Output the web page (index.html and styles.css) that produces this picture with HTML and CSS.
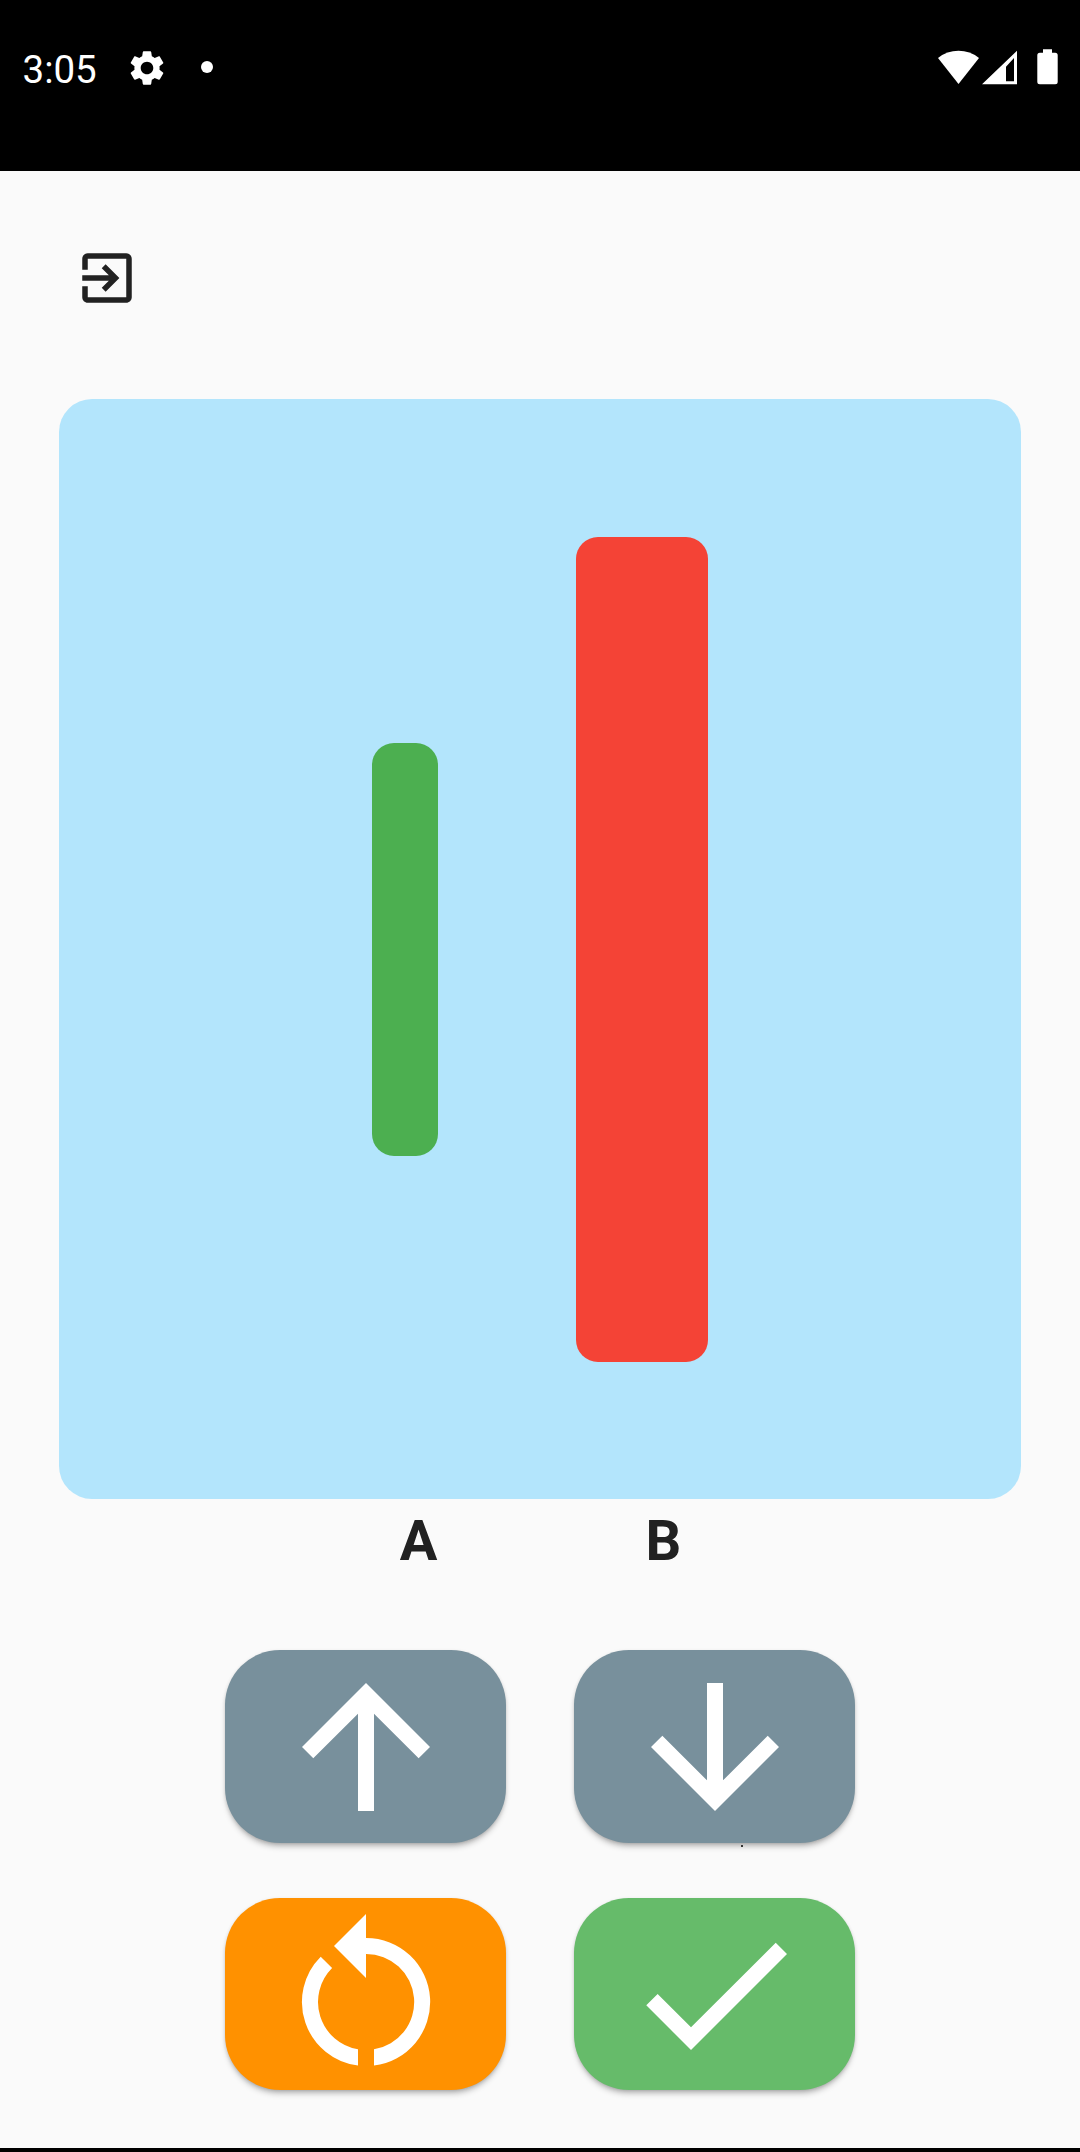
FILE: index.html
```html
<!DOCTYPE html>
<html lang="en-US">
    <head>
        <title>Compare</title>
        <meta name="viewport" content="width=device-width, initial-scale=1.0">
        <link rel="stylesheet" href="styles.css">
    </head>
    <body>

        <header class="status-bar">
            <span class="clock">3:05</span>
            <svg class="gear" viewBox="0 0 24 24"><path d="M19.14 12.94c.04-.3.06-.61.06-.94 0-.32-.02-.64-.07-.94l2.03-1.58c.18-.14.23-.41.12-.61l-1.92-3.32c-.12-.22-.37-.29-.59-.22l-2.39.96c-.5-.38-1.03-.7-1.62-.94l-.36-2.54c-.04-.24-.24-.41-.48-.41h-3.84c-.24 0-.43.17-.47.41l-.36 2.54c-.59.24-1.13.57-1.62.94l-2.39-.96c-.22-.08-.47 0-.59.22L2.74 8.87c-.12.21-.08.47.12.61l2.03 1.58c-.05.3-.09.63-.09.94s.02.64.07.94l-2.03 1.58c-.18.14-.23.41-.12.61l1.92 3.32c.12.22.37.29.59.22l2.39-.96c.5.38 1.03.7 1.62.94l.36 2.54c.05.24.24.41.48.41h3.84c.24 0 .44-.17.47-.41l.36-2.54c.59-.24 1.13-.56 1.62-.94l2.39.96c.22.08.47 0 .59-.22l1.92-3.32c.12-.22.07-.47-.12-.61l-2.01-1.58zM12 15.6c-1.98 0-3.6-1.62-3.6-3.6s1.62-3.6 3.6-3.6 3.6 1.62 3.6 3.6-1.62 3.6-3.6 3.6z"/></svg>
            <span class="dot"></span>
            <div class="status-icons">
                <svg class="wifi" viewBox="0 0 41 42"><path d="M0 12A33 33 0 0 1 41 12L20.5 38z"/></svg>
                <svg class="signal" viewBox="0 0 35 42"><path fill-rule="evenodd" d="M0 38.3L35 4.7V38.3zM24 20.7V35.3H32V12z"/></svg>
                <svg class="battery" viewBox="0 0 21 42"><path d="M6 3.3H15V6.7H18.2A2.5 2.5 0 0 1 20.7 9.2V35.8A2.5 2.5 0 0 1 18.2 38.3H2.8A2.5 2.5 0 0 1 .3 35.8V9.2A2.5 2.5 0 0 1 2.8 6.7H6z"/></svg>
            </div>
        </header>

        <main class="content">
            <div class="toolbar">
                <svg class="exit" viewBox="0 0 24 24"><path d="M10.09 15.59L11.5 17l5-5-5-5-1.41 1.41L12.67 11H3v2h9.67l-2.58 2.59zM19 3H5c-1.11 0-2 .9-2 2v4h2V5h14v14H5v-4H3v4c0 1.1.89 2 2 2h14c1.1 0 2-.9 2-2V5c0-1.1-.9-2-2-2z"/></svg>
            </div>

            <div class="chart">
                <div class="bar bar-a"></div>
                <div class="bar bar-b"></div>
            </div>

            <div class="labels">
                <span>A</span>
                <span>B</span>
            </div>

            <div class="controls">
                <button class="btn btn-grey" type="button">
                    <svg viewBox="0 0 24 24"><path d="M4 12l1.41 1.41L11 7.83V20h2V7.83l5.58 5.59L20 12l-8-8-8 8z"/></svg>
                </button>
                <button class="btn btn-grey" type="button">
                    <svg viewBox="0 0 24 24"><path d="M20 12l-1.41-1.41L13 16.17V4h-2v12.17l-5.58-5.59L4 12l8 8 8-8z"/></svg>
                    <span class="speck"></span>
                </button>
                <button class="btn btn-orange" type="button">
                    <svg viewBox="0 0 24 24"><path d="M12 2L8 6l4 4V7A6 6 0 0 1 13 18.92V20.94A8 8 0 0 0 12 5zM11 20.94V18.92A6 6 0 0 1 7.76 8.76L6.34 7.34A8 8 0 0 0 11 20.94z"/></svg>
                </button>
                <button class="btn btn-green" type="button">
                    <svg viewBox="0 0 24 24"><path d="M9 16.17L4.83 12l-1.42 1.41L9 19 21 7l-1.41-1.41z"/></svg>
                </button>
            </div>
        </main>

        <div class="nav-edge"></div>

    </body>
</html>
```

FILE: styles.css
```css
* {
    box-sizing: border-box;
    margin: 0;
}

html {
    background: #FAFAFA;
    color: #212121;
    font-family: Roboto, "Liberation Sans", sans-serif;
}

body {
    display: flex;
    flex-direction: column;
    height: 2152px;
    overflow: hidden;
}

svg {
    display: block;
    fill: currentColor;
}

/* status bar */
.status-bar {
    display: flex;
    align-items: flex-start;
    flex: none;
    height: 171px;
    padding: 46px 22px 0 22.5px;
    background: #000;
    color: #FFF;
}

.clock {
    width: 103px;
    margin-top: 3px;
    font-size: 38.5px;
    line-height: 42px;
}

.gear {
    width: 42px;
    height: 42px;
    margin-top: 0.5px;
}

.dot {
    width: 12px;
    height: 12px;
    margin: 15px 0 0 33.5px;
    background: #FFF;
    border-radius: 50%;
}

.status-icons {
    display: flex;
    margin-left: auto;
}

.wifi, .signal, .battery {
    height: 42px;
}

.wifi {
    width: 41px;
    margin-right: 3px;
}

.signal {
    width: 35px;
    margin-right: 20px;
}

.battery {
    width: 21px;
}

/* main */
.content {
    flex: 1;
}

.toolbar {
    height: 228px;
    padding: 74px 0 0 74px;
}

.exit {
    width: 66px;
    height: 66px;
}

.chart {
    display: flex;
    align-items: center;
    justify-content: center;
    gap: 138px;
    width: 962px;
    height: 1100px;
    margin-left: 59px;
    background: #B3E5FC;
    border-radius: 33px;
}

.bar {
    border-radius: 22px;
}

.bar-a {
    width: 66px;
    height: 413px;
    background: #4CAF50;
}

.bar-b {
    width: 132px;
    height: 825px;
    background: #F44336;
}

.labels {
    display: flex;
    justify-content: center;
    gap: 208px;
    margin-top: 9px;
    padding-left: 1px;
    font-size: 56px;
    font-weight: 700;
    line-height: 66px;
}

.controls {
    display: grid;
    grid-template-columns: 280.5px 280.5px;
    grid-template-rows: 193px 192px;
    justify-content: center;
    gap: 55px 68.5px;
    margin-top: 76px;
}

.btn {
    position: relative;
    display: flex;
    align-items: center;
    justify-content: center;
    padding: 0;
    border: none;
    border-radius: 55px;
    color: #FFF;
    box-shadow: 0 5px 6px -2px rgba(0, 0, 0, 0.28), 0 1px 4px -1px rgba(0, 0, 0, 0.18);
}

.btn svg {
    width: 192px;
    height: 192px;
}

.btn-grey {
    background: #78909C;
}

.btn-orange {
    background: #FF9100;
}

.btn-green {
    background: #66BB6A;
}

.speck {
    position: absolute;
    top: 195px;
    left: 167px;
    width: 2px;
    height: 2px;
    background: #333;
}

.nav-edge {
    flex: none;
    height: 4px;
    background: #000;
}
```
